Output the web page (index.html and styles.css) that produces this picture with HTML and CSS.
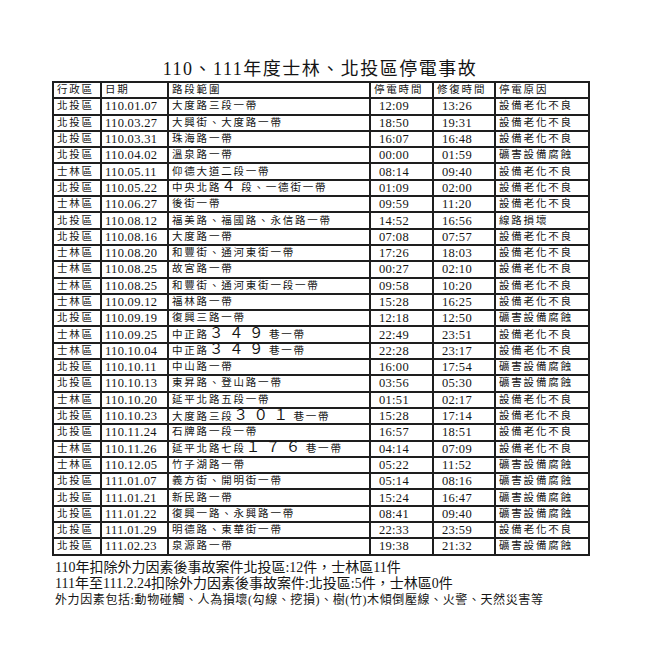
FILE: index.html
```html
<!DOCTYPE html>
<html lang="zh-Hant">
<head>
<meta charset="utf-8">
<title>110、111年度士林、北投區停電事故</title>
<link rel="stylesheet" href="styles.css">
</head>
<body>
<div class="page">
  <h1 class="title">110、111年度士林、北投區停電事故</h1>
  <table class="grid">
    <colgroup>
      <col class="c-dist"><col class="c-date"><col class="c-road"><col class="c-t1"><col class="c-t2"><col class="c-why">
    </colgroup>
    <thead>
      <tr><th class="zh">行政區</th><th class="zh">日期</th><th class="zh">路段範圍</th><th class="zh">停電時間</th><th class="zh">修復時間</th><th class="zh">停電原因</th></tr>
    </thead>
    <tbody>
      <tr><td class="zh">北投區</td><td class="num">110.01.07</td><td class="zh">大度路三段一帶</td><td class="num time">12:09</td><td class="num time">13:26</td><td class="zh">設備老化不良</td></tr>
      <tr><td class="zh">北投區</td><td class="num">110.03.27</td><td class="zh">大興街、大度路一帶</td><td class="num time">18:50</td><td class="num time">19:31</td><td class="zh">設備老化不良</td></tr>
      <tr><td class="zh">北投區</td><td class="num">110.03.31</td><td class="zh">珠海路一帶</td><td class="num time">16:07</td><td class="num time">16:48</td><td class="zh">設備老化不良</td></tr>
      <tr><td class="zh">北投區</td><td class="num">110.04.02</td><td class="zh">溫泉路一帶</td><td class="num time">00:00</td><td class="num time">01:59</td><td class="zh">礦害設備腐蝕</td></tr>
      <tr><td class="zh">士林區</td><td class="num">110.05.11</td><td class="zh">仰德大道二段一帶</td><td class="num time">08:14</td><td class="num time">09:40</td><td class="zh">設備老化不良</td></tr>
      <tr><td class="zh">北投區</td><td class="num">110.05.22</td><td class="zh">中央北路<span class="fw">４</span>段、一德街一帶</td><td class="num time">01:09</td><td class="num time">02:00</td><td class="zh">設備老化不良</td></tr>
      <tr><td class="zh">士林區</td><td class="num">110.06.27</td><td class="zh">後街一帶</td><td class="num time">09:59</td><td class="num time">11:20</td><td class="zh">設備老化不良</td></tr>
      <tr><td class="zh">北投區</td><td class="num">110.08.12</td><td class="zh">福美路、福國路、永信路一帶</td><td class="num time">14:52</td><td class="num time">16:56</td><td class="zh">線路損壞</td></tr>
      <tr><td class="zh">北投區</td><td class="num">110.08.16</td><td class="zh">大度路一帶</td><td class="num time">07:08</td><td class="num time">07:57</td><td class="zh">設備老化不良</td></tr>
      <tr><td class="zh">士林區</td><td class="num">110.08.20</td><td class="zh">和豐街、通河東街一帶</td><td class="num time">17:26</td><td class="num time">18:03</td><td class="zh">設備老化不良</td></tr>
      <tr><td class="zh">士林區</td><td class="num">110.08.25</td><td class="zh">故宮路一帶</td><td class="num time">00:27</td><td class="num time">02:10</td><td class="zh">設備老化不良</td></tr>
      <tr><td class="zh">士林區</td><td class="num">110.08.25</td><td class="zh">和豐街、通河東街一段一帶</td><td class="num time">09:58</td><td class="num time">10:20</td><td class="zh">設備老化不良</td></tr>
      <tr><td class="zh">士林區</td><td class="num">110.09.12</td><td class="zh">福林路一帶</td><td class="num time">15:28</td><td class="num time">16:25</td><td class="zh">設備老化不良</td></tr>
      <tr><td class="zh">北投區</td><td class="num">110.09.19</td><td class="zh">復興三路一帶</td><td class="num time">12:18</td><td class="num time">12:50</td><td class="zh">礦害設備腐蝕</td></tr>
      <tr><td class="zh">士林區</td><td class="num">110.09.25</td><td class="zh">中正路<span class="fw">３４９</span>巷一帶</td><td class="num time">22:49</td><td class="num time">23:51</td><td class="zh">設備老化不良</td></tr>
      <tr><td class="zh">士林區</td><td class="num">110.10.04</td><td class="zh">中正路<span class="fw">３４９</span>巷一帶</td><td class="num time">22:28</td><td class="num time">23:17</td><td class="zh">設備老化不良</td></tr>
      <tr><td class="zh">北投區</td><td class="num">110.10.11</td><td class="zh">中山路一帶</td><td class="num time">16:00</td><td class="num time">17:54</td><td class="zh">礦害設備腐蝕</td></tr>
      <tr><td class="zh">北投區</td><td class="num">110.10.13</td><td class="zh">東昇路、登山路一帶</td><td class="num time">03:56</td><td class="num time">05:30</td><td class="zh">礦害設備腐蝕</td></tr>
      <tr><td class="zh">士林區</td><td class="num">110.10.20</td><td class="zh">延平北路五段一帶</td><td class="num time">01:51</td><td class="num time">02:17</td><td class="zh">設備老化不良</td></tr>
      <tr><td class="zh">北投區</td><td class="num">110.10.23</td><td class="zh">大度路三段<span class="fw">３０１</span>巷一帶</td><td class="num time">15:28</td><td class="num time">17:14</td><td class="zh">設備老化不良</td></tr>
      <tr><td class="zh">北投區</td><td class="num">110.11.24</td><td class="zh">石牌路一段一帶</td><td class="num time">16:57</td><td class="num time">18:51</td><td class="zh">設備老化不良</td></tr>
      <tr><td class="zh">士林區</td><td class="num">110.11.26</td><td class="zh">延平北路七段<span class="fw">１７６</span>巷一帶</td><td class="num time">04:14</td><td class="num time">07:09</td><td class="zh">設備老化不良</td></tr>
      <tr><td class="zh">士林區</td><td class="num">110.12.05</td><td class="zh">竹子湖路一帶</td><td class="num time">05:22</td><td class="num time">11:52</td><td class="zh">礦害設備腐蝕</td></tr>
      <tr><td class="zh">北投區</td><td class="num">111.01.07</td><td class="zh">義方街、開明街一帶</td><td class="num time">05:14</td><td class="num time">08:16</td><td class="zh">礦害設備腐蝕</td></tr>
      <tr><td class="zh">北投區</td><td class="num">111.01.21</td><td class="zh">新民路一帶</td><td class="num time">15:24</td><td class="num time">16:47</td><td class="zh">礦害設備腐蝕</td></tr>
      <tr><td class="zh">北投區</td><td class="num">111.01.22</td><td class="zh">復興一路、永興路一帶</td><td class="num time">08:41</td><td class="num time">09:40</td><td class="zh">礦害設備腐蝕</td></tr>
      <tr><td class="zh">北投區</td><td class="num">111.01.29</td><td class="zh">明德路、東華街一帶</td><td class="num time">22:33</td><td class="num time">23:59</td><td class="zh">設備老化不良</td></tr>
      <tr><td class="zh">北投區</td><td class="num">111.02.23</td><td class="zh">泉源路一帶</td><td class="num time">19:38</td><td class="num time">21:32</td><td class="zh">礦害設備腐蝕</td></tr>
    </tbody>
  </table>
  <div class="notes">
    <p class="note">110年扣除外力因素後事故案件北投區:12件，士林區11件</p>
    <p class="note">111年至111.2.24扣除外力因素後事故案件:北投區:5件，士林區0件</p>
    <p class="note small">外力因素包括:動物碰觸、人為損壞(勾線、挖損)、樹(竹)木傾倒壓線、火警、天然災害等</p>
  </div>
</div>
</body>
</html>
```
FILE: styles.css
```css
html, body {
  margin: 0;
  padding: 0;
  background: #ffffff;
}

body {
  color: #141414;
  font-family: "Liberation Serif", "Noto Sans CJK TC", serif;
}

.page {
  width: 536px;
  margin-left: 52px;
  padding-top: 57px;
}

.title {
  margin: 0;
  height: 24px;
  line-height: 24px;
  font-size: 18px;
  font-weight: normal;
  letter-spacing: 1.5px;
  text-align: center;
}

.grid {
  width: 536px;
  border-collapse: collapse;
  table-layout: fixed;
}

.c-dist { width: 48px; }
.c-date { width: 67px; }
.c-road { width: 202px; }
.c-t1 { width: 63px; }
.c-t2 { width: 62px; }
.c-why { width: 94px; }

.grid tr {
  height: 16.3px;
}

.grid th,
.grid td {
  border: 2px solid #1e1e1e;
  padding: 0 0 0 3px;
  line-height: 12px;
  text-align: left;
  font-weight: normal;
  white-space: nowrap;
  vertical-align: middle;
}

.zh {
  font-size: 10.5px;
  letter-spacing: 1.8px;
}

.num {
  font-size: 12.5px;
  letter-spacing: 0.3px;
}

.grid td.time {
  padding-left: 8px;
}

.fw {
  font-size: 14.5px;
  line-height: 10px;
  letter-spacing: 5.5px;
}

.notes {
  padding: 4px 0 0 3px;
}

.note {
  margin: 0;
  font-size: 14px;
  line-height: 16px;
  letter-spacing: 0;
  white-space: nowrap;
}

.note.small {
  font-size: 12px;
  letter-spacing: 0.6px;
}
```
